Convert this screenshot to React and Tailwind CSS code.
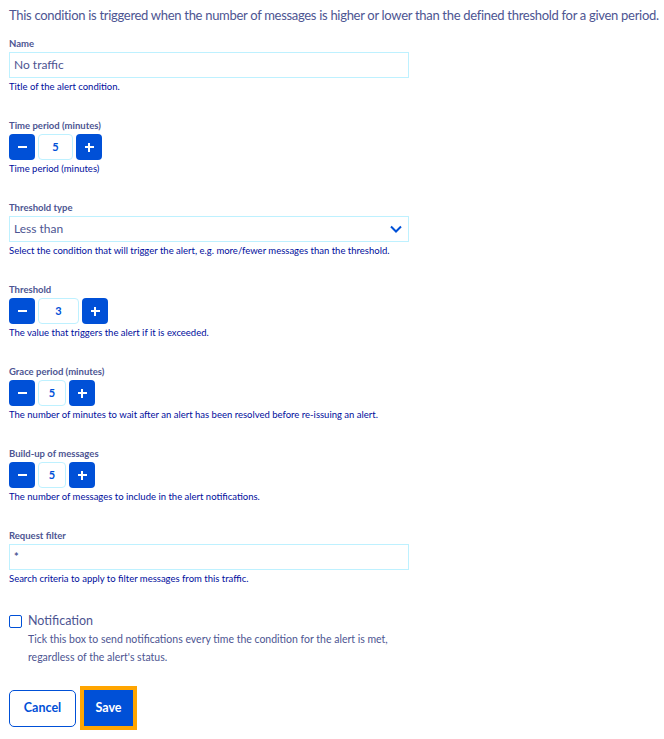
import { useState } from "react";

function Label({ children, className = "" }) {
  return (
    <div className={`text-[9.5px] font-bold leading-[12px] text-[#4d5592] ${className}`}>
      {children}
    </div>
  );
}

function Help({ children }) {
  return <div className="mt-[3px] text-[9.5px] leading-[12px] text-[#000e9c]">{children}</div>;
}

function Stepper({ value, width }) {
  return (
    <div className="mt-[2px] flex h-[26px] items-center gap-[3px]">
      <button className="flex h-[26px] w-[26px] items-center justify-center rounded-[4px] bg-[#0050d7]">
        <span className="block h-[2px] w-[9px] bg-white" />
      </button>
      <div
        className={`flex h-[26px] items-center justify-center rounded-[4px] border border-[#bef1ff] bg-white text-[11px] font-bold text-[#0050d7] ${width}`}
      >
        {value}
      </div>
      <button className="relative flex h-[26px] w-[26px] items-center justify-center rounded-[4px] bg-[#0050d7]">
        <span className="block h-[2px] w-[9px] bg-white" />
        <span className="absolute h-[9px] w-[2px] bg-white" />
      </button>
    </div>
  );
}

export default function App() {
  const [notify, setNotify] = useState(false);

  return (
    <div
      className="min-h-screen bg-white px-[9px] pt-[6px] text-[#4d5592]"
      style={{ fontFamily: "Lato, 'Open Sans', sans-serif" }}
    >
      <p className="whitespace-nowrap text-[13px] leading-[18px] tracking-[-0.3px]">
        This condition is triggered when the number of messages is higher or lower than the defined threshold for a given period.
      </p>

      {/* Name */}
      <Label className="mt-[14px]">Name</Label>
      <div className="mt-[2px] flex h-[26px] w-[400px] items-center border border-[#bef1ff] px-[4px] text-[12px]">
        No traffic
      </div>
      <Help>Title of the alert condition.</Help>

      {/* Time period */}
      <Label className="mt-[27px]">Time period (minutes)</Label>
      <Stepper value="5" width="w-[35px]" />
      <Help>Time period (minutes)</Help>

      {/* Threshold type */}
      <Label className="mt-[27px]">Threshold type</Label>
      <div className="mt-[2px] flex h-[26px] w-[400px] items-center justify-between border border-[#bef1ff] pl-[4px] pr-[6px] text-[12px]">
        <span>Less than</span>
        <svg width="12" height="8" viewBox="0 0 12 8" fill="none">
          <path d="M1 1.5l5 5 5-5" stroke="#0050d7" strokeWidth="2" />
        </svg>
      </div>
      <Help>Select the condition that will trigger the alert, e.g. more/fewer messages than the threshold.</Help>

      {/* Threshold */}
      <Label className="mt-[27px]">Threshold</Label>
      <Stepper value="3" width="w-[41px]" />
      <Help>The value that triggers the alert if it is exceeded.</Help>

      {/* Grace period */}
      <Label className="mt-[27px]">Grace period (minutes)</Label>
      <Stepper value="5" width="w-[28px]" />
      <Help>The number of minutes to wait after an alert has been resolved before re-issuing an alert.</Help>

      {/* Build-up */}
      <Label className="mt-[27px]">Build-up of messages</Label>
      <Stepper value="5" width="w-[28px]" />
      <Help>The number of messages to include in the alert notifications.</Help>

      {/* Request filter */}
      <Label className="mt-[27px]">Request filter</Label>
      <div className="mt-[2px] flex h-[26px] w-[400px] items-center border border-[#bef1ff] px-[4px] text-[11px] font-bold">
        *
      </div>
      <Help>Search criteria to apply to filter messages from this traffic.</Help>

      {/* Notification */}
      <div className="mt-[28px] flex gap-[6px]">
        <button
          onClick={() => setNotify(!notify)}
          className="mt-[2px] h-[13px] w-[13px] shrink-0 rounded-[2px] border border-[#0050d7] bg-white"
        />
        <div>
          <div className="text-[12.5px] leading-[16px]">Notification</div>
          <div className="mt-[1px] text-[10.5px] leading-[18px]">
            Tick this box to send notifications every time the condition for the alert is met,
            <br />
            regardless of the alert's status.
          </div>
        </div>
      </div>

      {/* Actions */}
      <div className="mt-[20px] flex items-center gap-[4px]">
        <button className="h-[37px] w-[67px] rounded-[5px] border border-[#0050d7] bg-white text-[12.5px] font-bold text-[#0050d7]">
          Cancel
        </button>
        <button className="h-[44px] w-[57px] border-[4px] border-[#ffa500] bg-[#0050d7] text-[12.5px] font-bold text-white">
          Save
        </button>
      </div>
    </div>
  );
}
